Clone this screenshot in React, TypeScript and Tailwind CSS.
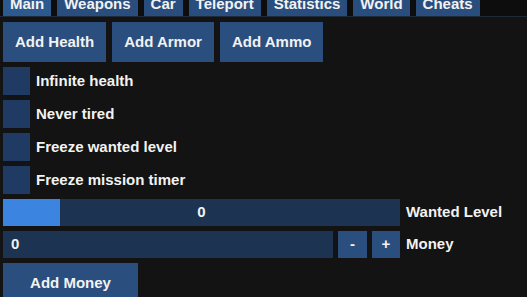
import { useState } from "react";

const tabs = ["Main", "Weapons", "Car", "Teleport", "Statistics", "World", "Cheats"];
const actions = ["Add Health", "Add Armor", "Add Ammo"];
const toggles = ["Infinite health", "Never tired", "Freeze wanted level", "Freeze mission timer"];

const App = () => {
    const [checked, setChecked] = useState<Record<string, boolean>>({});
    const [money, setMoney] = useState(0);
    const wanted = 0;

    return (
        <div className="w-[527px] h-[297px] overflow-hidden bg-[#131313] text-[15px] font-bold text-[#f2f2f2] font-['Liberation_Sans',Arial,sans-serif]">
            {/* ===== TAB BAR ===== */}
            <div className="bg-[#0d0d0d] border-b border-[#1f2a38] -mt-[10px] pl-[3px] flex gap-[6px]">
                {tabs.map((tab) => (
                    <button
                        key={tab}
                        className={`h-[26px] px-[7px] leading-none ${tab === "Main" ? "bg-[#2d5a8e]" : "bg-[#294e7e]"}`}
                    >
                        {tab}
                    </button>
                ))}
            </div>

            {/* ===== CONTENT ===== */}
            <div className="pl-[3px] pt-[5px] flex flex-col gap-[5px]">
                <div className="flex gap-[6px]">
                    {actions.map((a) => (
                        <button key={a} className="h-[40px] px-[12px] bg-[#2a4f7f]">
                            {a}
                        </button>
                    ))}
                </div>

                {toggles.map((t) => (
                    <label key={t} className="h-[28px] flex items-center gap-[6px] cursor-pointer">
                        <span
                            className={`w-[27px] h-[28px] ${checked[t] ? "bg-[#3b82e0]" : "bg-[#1f3b63]"}`}
                            onClick={() => setChecked({ ...checked, [t]: !checked[t] })}
                        />
                        <span>{t}</span>
                    </label>
                ))}

                {/* Wanted level slider */}
                <div className="flex items-center gap-[6px]">
                    <div className="relative w-[397px] h-[27px] bg-[#1c3352]">
                        <div className="absolute left-0 top-0 bottom-0 w-[57px] bg-[#3b84e0]" />
                        <span className="absolute inset-0 flex items-center justify-center">{wanted}</span>
                    </div>
                    <span>Wanted Level</span>
                </div>

                {/* Money */}
                <div className="flex items-center gap-[6px]">
                    <div className="w-[397px] flex gap-[5px]">
                        <div className="flex-1 h-[27px] bg-[#1c3352] flex items-center pl-[8px]">{money}</div>
                        <button className="w-[29px] h-[27px] bg-[#2a4f7f]" onClick={() => setMoney(money - 1)}>
                            -
                        </button>
                        <button className="w-[28px] h-[27px] bg-[#2a4f7f]" onClick={() => setMoney(money + 1)}>
                            +
                        </button>
                    </div>
                    <span>Money</span>
                </div>

                <button className="w-[135px] h-[40px] bg-[#2a4f7f]">Add Money</button>
            </div>
        </div>
    );
};

export default App;
